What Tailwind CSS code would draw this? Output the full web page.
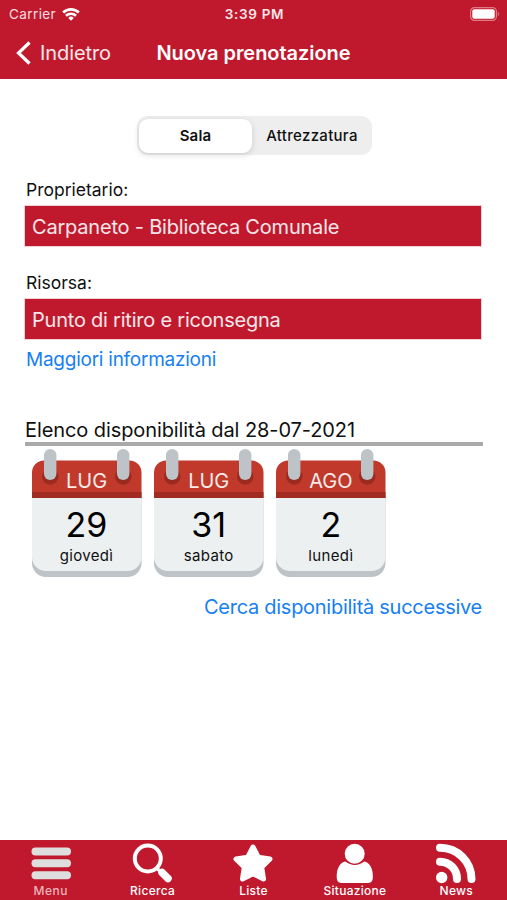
<!DOCTYPE html>
<html lang="it">
<head>
<meta charset="utf-8">
<meta name="viewport" content="width=device-width">
<title>Nuova prenotazione</title>
<script src="https://cdn.jsdelivr.net/npm/@tailwindcss/browser@4"></script>
</head>
<body class="flex h-[900px] w-[507px] flex-col overflow-hidden bg-white font-['Inter',sans-serif] text-[#101010]">
<svg class="hidden">
  <symbol id="calendar" viewBox="0 0 110 128">
    <path d="M0 46h109.500v68a14 14 0 0 1-14 14H14a14 14 0 0 1-14-14z" fill="#bdc3c7"/>
    <path d="M0 46h109.500v62a14 14 0 0 1-14 14H14a14 14 0 0 1-14-14z" fill="#ecf0f1"/>
    <path d="M0 49V23.500a12 12 0 0 1 12-12h85.500a12 12 0 0 1 12 12V49z" fill="#c0392b"/>
    <path d="M0 43h109.500v6H0z" fill="#a12b20"/>
    <path d="M12.500 21.500a8.300 8.300 0 1 0 11.500 0zM85.500 21.500a8.300 8.300 0 1 0 11.500 0z" fill="#9b2b20"/>
    <rect x="12" y="0" width="12.400" height="31" rx="6.200" fill="#bdc3c7"/>
    <rect x="85" y="0" width="12.400" height="31" rx="6.200" fill="#bdc3c7"/>
  </symbol>
</svg>
<header class="flex h-[79px] flex-col bg-[#c0182d] text-white">
  <div class="grid h-[27px] grid-cols-3 items-center pt-px pr-[7px] pl-[9px] text-[13.500px]">
    <div class="flex items-center gap-[6px] text-white/85"><span class="tracking-[0.4px]">Carrier</span>
      <svg class="h-[14px] w-[18px]" viewBox="0 0 19 14" fill="none" stroke="#fff" stroke-width="2.800"><path d="M1.200 5.400a12 12 0 0 1 16.600 0M4.200 8.900a7.600 7.600 0 0 1 10.600 0"/><path d="M9.500 14 6.600 11.100a4.200 4.200 0 0 1 5.800 0z" fill="#fff" stroke="none"/></svg>
    </div>
    <span class="text-center font-semibold tracking-[0.7px] whitespace-nowrap text-white/90">3:39 PM</span>
    <svg class="h-[14px] w-[30px] justify-self-end" viewBox="0 0 30 14"><rect x=".6" y=".6" width="25.800" height="12.800" rx="3.800" fill="none" stroke="#dd7d8a" stroke-width="1.200"/><rect x="2.300" y="2.300" width="22.400" height="9.400" rx="2" fill="#fff"/><path d="M27.800 4.500q2 2.500 0 5z" fill="#e28d98"/></svg>
  </div>
  <div class="grid h-[52px] grid-cols-[127px_1fr_127px] items-center">
    <div class="flex items-center gap-[9px] pl-4 text-[20px] text-white/90">
      <svg class="h-6 w-[15px]" viewBox="0 0 15 24" fill="none" stroke="#fff" stroke-width="3.200"><path d="M13.500 1.500 2.500 12l11 10.500"/></svg><span class="tracking-[-0.1px]">Indietro</span>
    </div>
    <h1 class="text-center text-[20px] font-semibold tracking-[-0.05px] whitespace-nowrap">Nuova prenotazione</h1>
  </div>
</header>
<main class="flex grow flex-col pt-[37px] pr-[25px] pl-[25px]">
  <div class="ml-[112px] flex h-[39px] w-[235px] items-center rounded-[11px] bg-[#eeeeef] p-[2px] pt-[3px] text-[15px]">
    <div class="flex h-[34px] w-[113px] items-center justify-center rounded-[9px] bg-white font-semibold tracking-[0.2px] shadow-[0_2px_6px_rgba(0,0,0,0.14)]">Sala</div>
    <div class="grow pl-[2px] text-center font-medium tracking-[0.3px]">Attrezzatura</div>
  </div>
  <label class="mt-[22px] h-[29px] pl-px text-[17.500px] leading-[25px]">Proprietario:</label>
  <div class="flex h-[40px] w-[456px] items-center bg-[#c0182d] pt-px pl-[7px] text-[20px] tracking-[-0.2px] text-white/90 outline outline-[#c0182d]/20">Carpaneto - Biblioteca Comunale</div>
  <label class="mt-[24px] h-[29px] pl-px text-[17.500px] leading-[25px]">Risorsa:</label>
  <div class="flex h-[40px] w-[456px] items-center bg-[#c0182d] pt-px pl-[7px] text-[20px] tracking-[-0.22px] text-white/90 outline outline-[#c0182d]/20">Punto di ritiro e riconsegna</div>
  <a class="mt-[9px] h-[24px] pl-px text-[19px] leading-[24px] tracking-[-0.25px] text-[#1680f2]">Maggiori informazioni</a>
  <h2 class="mt-[46px] h-[24px] text-[20px] leading-[25px] tracking-[-0.09px]">Elenco disponibilità dal 28-07-2021</h2>
  <div class="h-[4px] w-[458px] bg-[#a9a9a9]"></div>
  <div class="mt-[3px] ml-[7px] flex gap-[12.200px]">
    <div class="grid h-[128px] w-[110px] *:[grid-area:1/1]">
      <svg class="h-[128px] w-[110px]"><use href="#calendar"/></svg>
      <div class="flex flex-col items-center pr-px"><span class="mt-[20px] text-[20px] leading-[24px] text-white/90">LUG</span><span class="mt-[12px] text-[34px] leading-[40px] text-black">29</span><span class="text-[15px] leading-[21px] tracking-[0.35px]">giovedì</span></div>
    </div>
    <div class="grid h-[128px] w-[110px] *:[grid-area:1/1]">
      <svg class="h-[128px] w-[110px]"><use href="#calendar"/></svg>
      <div class="flex flex-col items-center pr-px"><span class="mt-[20px] text-[20px] leading-[24px] text-white/90">LUG</span><span class="mt-[12px] text-[34px] leading-[40px] text-black">31</span><span class="text-[15px] leading-[21px] tracking-[0.35px]">sabato</span></div>
    </div>
    <div class="grid h-[128px] w-[110px] *:[grid-area:1/1]">
      <svg class="h-[128px] w-[110px]"><use href="#calendar"/></svg>
      <div class="flex flex-col items-center pr-px"><span class="mt-[20px] text-[20px] leading-[24px] text-white/90">AGO</span><span class="mt-[12px] text-[34px] leading-[40px] text-black">2</span><span class="text-[15px] leading-[21px] tracking-[0.35px]">lunedì</span></div>
    </div>
  </div>
  <a class="mt-[18px] self-end text-[20px] leading-[24px] tracking-[-0.27px] text-[#1680f2]">Cerca disponibilità successive</a>
</main>
<nav class="grid h-[60px] grid-cols-5 bg-[#c0182d] pt-[3px] text-center text-[12px] font-medium text-white">
  <div class="flex flex-col items-center text-[#e9b5bb]"><svg class="h-[42px] w-[42px]" viewBox="0 0 42 42" fill="#dedede"><rect x="1.500" y="4.500" width="39.500" height="8" rx="4"/><rect x="1.500" y="16.300" width="39.500" height="8" rx="4"/><rect x="1.500" y="28.300" width="39.500" height="8" rx="4"/></svg><span class="-mt-px leading-[14px] tracking-[0.5px]">Menu</span></div>
  <div class="flex flex-col items-center"><svg class="h-[42px] w-[42px]" viewBox="0 0 42 42" fill="none" stroke="#fff"><circle cx="16.800" cy="15.500" r="13" stroke-width="4"/><path d="m25.500 25 5 4.500" stroke-width="3.500"/><path d="m31 29.500 6 6" stroke-width="7.500" stroke-linecap="round"/></svg><span class="-mt-px pl-px leading-[14px] tracking-[0.3px]">Ricerca</span></div>
  <div class="flex flex-col items-center"><svg class="h-[42px] w-[42px]" viewBox="0 0 42 42" fill="#fff" stroke="#fff" stroke-width="5" stroke-linejoin="round"><path d="m21 4 5.300 10.200L38 16l-8.300 8.200L31.500 36 21 30.700 10.500 36l1.800-11.800L4 16l11.700-1.800z"/></svg><span class="-mt-px leading-[14px] tracking-[0.2px]">Liste</span></div>
  <div class="flex flex-col items-center"><svg class="h-[42px] w-[42px]" viewBox="0 0 42 42" fill="#fff"><circle cx="20.700" cy="10.700" r="10"/><path d="M11.500 18.600C6 19.500 2.700 25.500 2.700 33.500c0 4.500 1.500 6.500 5.500 6.500h25.200c4 0 5.500-2 5.500-6.500 0-8-3.300-14-8.800-14.900-5.500 4.500-13 4.500-18.600 0z"/></svg><span class="-mt-px leading-[14px] tracking-[0.25px]">Situazione</span></div>
  <div class="flex flex-col items-center"><svg class="h-[42px] w-[42px]" viewBox="0 0 42 42" fill="none" stroke="#fff" stroke-width="8" stroke-linecap="round"><circle cx="6.700" cy="34.500" r="5.700" fill="#fff" stroke="none"/><path d="M5 4.700C22.500 4.700 36.500 18.500 36.500 36M5 18.700c9.500 0 17 7.500 17 17.300"/></svg><span class="-mt-px leading-[14px] tracking-[0.3px]">News</span></div>
</nav>
</body>
</html>
